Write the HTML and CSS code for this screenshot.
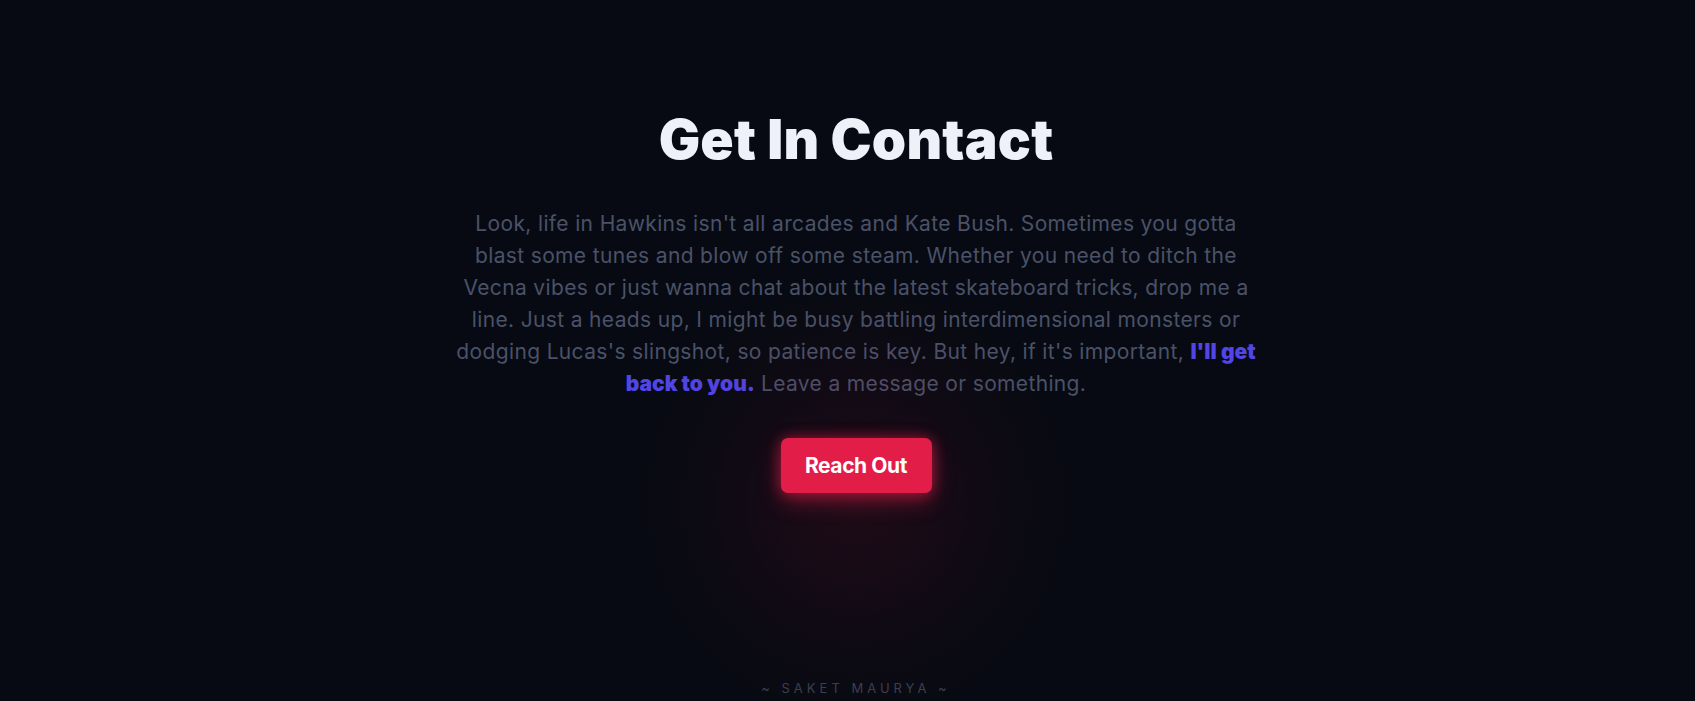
FILE: index.html
```html
<!DOCTYPE html>
<html lang="en">
<head>
<meta charset="utf-8">
<title>Get In Contact</title>
<link rel="stylesheet" href="styles.css">
</head>
<body>
<div class="page">
  <main class="contact">
    <h1 class="contact-title">Get In Contact</h1>
    <p class="contact-text">Look, life in Hawkins isn't all arcades and Kate Bush. Sometimes you gotta blast some tunes and blow off some steam. Whether you need to ditch the Vecna vibes or just wanna chat about the latest skateboard tricks, drop me a line. Just a heads up, I might be busy battling interdimensional monsters or dodging Lucas's slingshot, so patience is key. But hey, if it's important, <strong class="highlight">I'll get back to you.</strong> Leave a message or something.</p>
    <div class="cta-wrap">
      <a class="cta" href="#">Reach Out</a>
    </div>
  </main>
  <footer class="footer">~ SAKET MAURYA ~</footer>
</div>
</body>
</html>
```
FILE: styles.css
```css
html, body {
  margin: 0;
  padding: 0;
  background: #070a12;
}
body {
  font-family: Inter, "Noto Sans", "Liberation Sans", sans-serif;
  overflow: hidden;
}
.page {
  height: 701px;
  display: flex;
  flex-direction: column;
  padding-left: 17px;
  box-sizing: border-box;
}
.contact {
  flex: 1;
  display: flex;
  flex-direction: column;
  align-items: center;
  padding-top: 104px;
}
.contact-title {
  margin: 0;
  font-size: 55px;
  font-weight: 900;
  line-height: 70px;
  letter-spacing: 0.2px;
  color: #eef1f8;
}
.contact-text {
  margin: 34px 0 0;
  max-width: 805px;
  text-align: center;
  font-size: 21px;
  line-height: 32px;
  letter-spacing: 0.35px;
  color: #4a5268;
}
.highlight {
  color: #5145e6;
  font-weight: 900;
  letter-spacing: 0;
}
.cta-wrap {
  position: relative;
  margin-top: 38px;
}
.cta-wrap::before {
  content: "";
  position: absolute;
  left: 50%;
  top: 50%;
  width: 460px;
  height: 460px;
  transform: translate(-50%, -42%);
  border-radius: 50%;
  background: radial-gradient(circle, rgba(200, 20, 60, 0.12) 0%, rgba(120, 10, 50, 0.06) 45%, rgba(7, 10, 18, 0) 70%);
  pointer-events: none;
}
.cta {
  position: relative;
  display: flex;
  align-items: center;
  justify-content: center;
  width: 151px;
  height: 55px;
  border-radius: 7px;
  background: #e11d48;
  color: #fff;
  font-size: 21px;
  font-weight: 700;
  letter-spacing: -0.4px;
  text-decoration: none;
  box-shadow: 0 0 14px rgba(225, 29, 72, 0.55), 0 8px 22px rgba(225, 29, 72, 0.45);
}
.footer {
  text-align: center;
  font-size: 13px;
  letter-spacing: 4px;
  color: #3a4051;
  padding-bottom: 5px;
}
```
